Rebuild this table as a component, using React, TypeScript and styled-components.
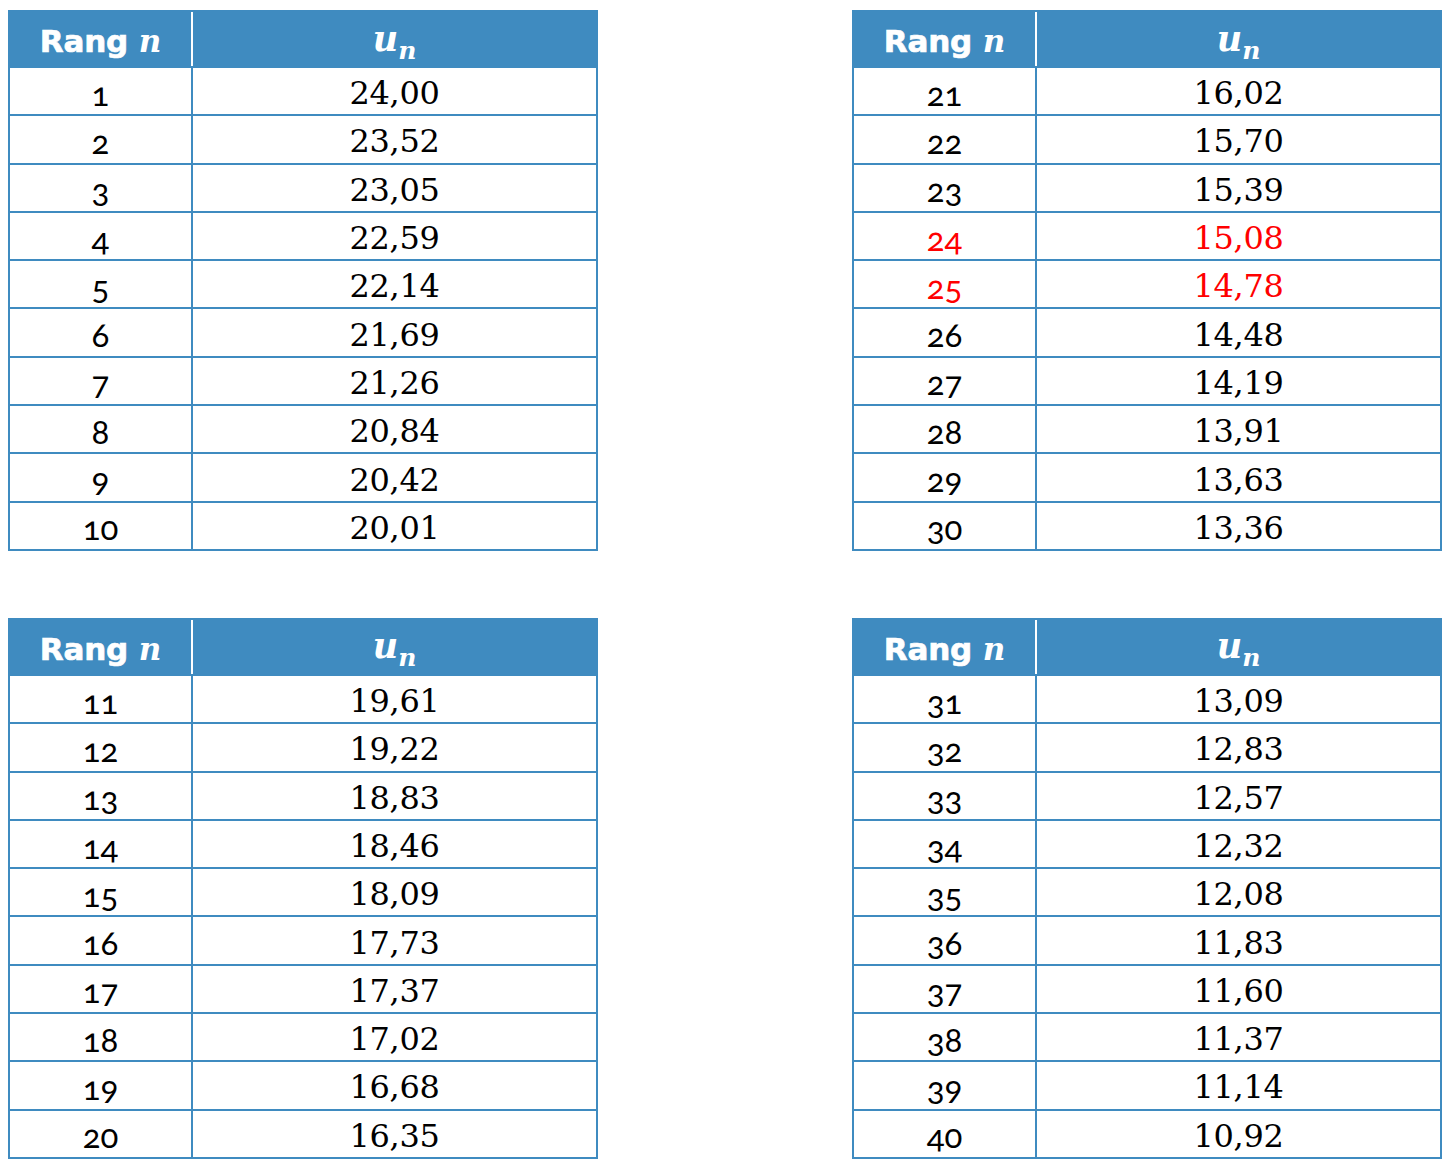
import React from 'react'
import styled, { createGlobalStyle } from 'styled-components'

const GlobalStyle = createGlobalStyle`
  html, body {
    margin: 0;
    padding: 0;
    background: #ffffff;
  }
`

const BLUE = '#3f8bc0'

const Page = styled.div`
  display: grid;
  grid-template-columns: 590px 590px;
  column-gap: 254px;
  row-gap: 67px;
  padding: 10px 0 0 8px;
`

const Table = styled.table`
  width: 590px;
  table-layout: fixed;
  border-collapse: collapse;
  border: 2px solid ${BLUE};
`

const HeadRow = styled.tr`
  height: 56px;
  background: ${BLUE};
`

const HeadCell = styled.th<{ $first?: boolean }>`
  width: ${(p) => (p.$first ? '181px' : 'auto')};
  padding: 4px 0 0;
  color: #ffffff;
  text-align: center;
  vertical-align: middle;
  border-left: ${(p) => (p.$first ? 'none' : '2px solid #ffffff')};
  border-top: 2px solid ${BLUE};
  border-bottom: 2px solid ${BLUE};
`

const RangLabel = styled.span`
  font-family: 'DejaVu Sans', 'Open Sans', sans-serif;
  font-weight: 700;
  font-size: 31px;
  letter-spacing: -0.2px;
  -webkit-text-stroke: 0.7px #ffffff;
`

const MathVar = styled.i<{ $big?: boolean }>`
  font-family: 'DejaVu Serif', 'Liberation Serif', serif;
  font-weight: 700;
  font-style: italic;
  font-size: ${(p) => (p.$big ? '35px' : '31px')};
`

const Sub = styled.sub`
  font-size: 25px;
  vertical-align: -8px;
`

const Row = styled.tr`
  height: 48.3px;
`

const RankCell = styled.td<{ $hot?: boolean }>`
  padding: 4px 0 0;
  border: 2px solid ${BLUE};
  text-align: center;
  vertical-align: middle;
  font-family: 'Lato', 'Open Sans', sans-serif;
  font-weight: 400;
  font-variant-numeric: oldstyle-nums;
  font-size: 33px;
  line-height: 1;
  color: ${(p) => (p.$hot ? '#ff0000' : '#000000')};
`

const ValueCell = styled.td<{ $hot?: boolean }>`
  padding: 4px 0 0;
  border: 2px solid ${BLUE};
  text-align: center;
  vertical-align: middle;
  font-family: 'DejaVu Serif', 'Liberation Serif', serif;
  font-size: 32px;
  line-height: 1;
  letter-spacing: -0.3px;
  color: ${(p) => (p.$hot ? '#ff0000' : '#000000')};
`

const values = [
  '24,00', '23,52', '23,05', '22,59', '22,14', '21,69', '21,26', '20,84', '20,42', '20,01',
  '19,61', '19,22', '18,83', '18,46', '18,09', '17,73', '17,37', '17,02', '16,68', '16,35',
  '16,02', '15,70', '15,39', '15,08', '14,78', '14,48', '14,19', '13,91', '13,63', '13,36',
  '13,09', '12,83', '12,57', '12,32', '12,08', '11,83', '11,60', '11,37', '11,14', '10,92',
]

const highlighted = [24, 25]

// order on screen: 1-10, 21-30, 11-20, 31-40
const blocks = [0, 20, 10, 30]

const SequenceTable: React.FC<{ start: number }> = ({ start }) => (
  <Table>
    <thead>
      <HeadRow>
        <HeadCell $first>
          <RangLabel>Rang </RangLabel>
          <MathVar>n</MathVar>
        </HeadCell>
        <HeadCell>
          <MathVar $big>
            u<Sub>n</Sub>
          </MathVar>
        </HeadCell>
      </HeadRow>
    </thead>
    <tbody>
      {values.slice(start, start + 10).map((v, i) => {
        const n = start + i + 1
        const hot = highlighted.includes(n)
        return (
          <Row key={n}>
            <RankCell $hot={hot}>{n}</RankCell>
            <ValueCell $hot={hot}>{v}</ValueCell>
          </Row>
        )
      })}
    </tbody>
  </Table>
)

export default function App() {
  return (
    <>
      <GlobalStyle />
      <Page>
        {blocks.map((b) => (
          <SequenceTable key={b} start={b} />
        ))}
      </Page>
    </>
  )
}
